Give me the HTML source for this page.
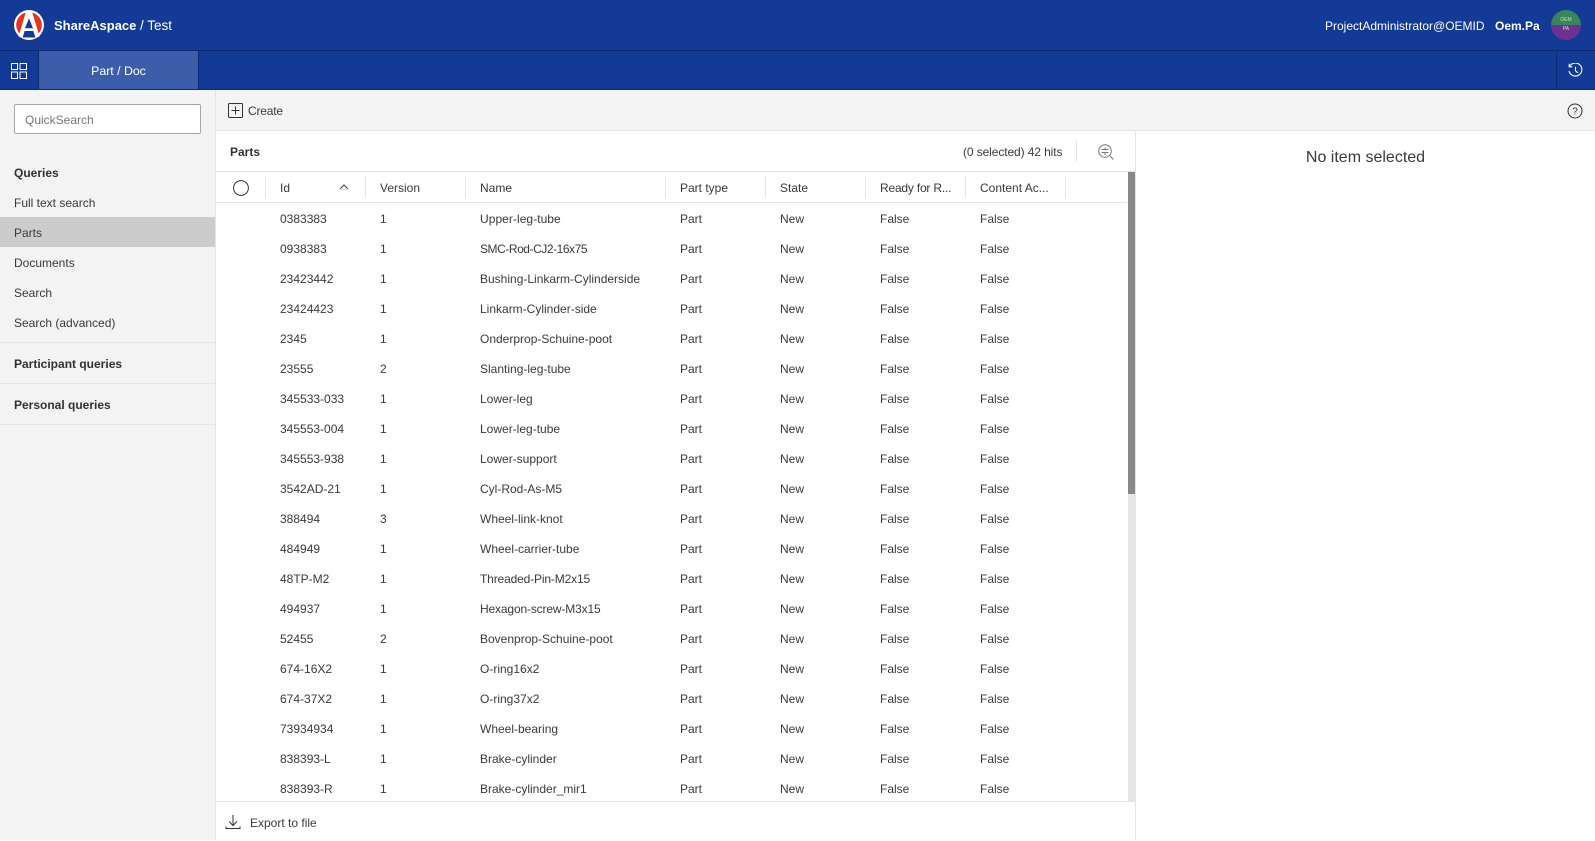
<!DOCTYPE html>
<html><head><meta charset="utf-8"><style>
html,body{margin:0;padding:0;width:1595px;height:840px;overflow:hidden;background:#fff;font-family:"Liberation Sans",sans-serif;font-size:12px;color:#3b3a39}
.a{position:absolute;white-space:nowrap}
.r{position:absolute;left:216px;width:911px;height:30px;line-height:30px;white-space:nowrap;overflow:hidden}
.r span{position:absolute;top:0}
.r span:nth-child(1),.h span:nth-child(1){left:64px}.r span:nth-child(2),.h span:nth-child(2){left:164px}.r span:nth-child(3),.h span:nth-child(3){left:264px}.r span:nth-child(4),.h span:nth-child(4){left:464px}.r span:nth-child(5),.h span:nth-child(5){left:564px}.r span:nth-child(6),.h span:nth-child(6){left:664px}.r span:nth-child(7),.h span:nth-child(7){left:764px}
.h{position:absolute;left:216px;top:173px;width:911px;height:30px;line-height:30px}
.h span{position:absolute;top:0}
.s{position:absolute;top:176px;width:1px;height:22px;background:#e6e6e6}
.n{position:absolute;left:14px;height:30px;line-height:30px}
.b{font-weight:bold;color:#323130}
</style></head><body>
<div class="a" style="left:0;top:0;width:1595px;height:50px;background:#133a96"></div>
<div class="a" style="left:0;top:50px;width:1595px;height:40px;background:#133a96;border-top:1px solid #0e2a6e;border-bottom:1px solid #0e2a6e;box-sizing:border-box"></div>
<svg class="a" style="left:14px;top:10px" width="30" height="30" viewBox="0 0 30 30"><circle cx="15" cy="15" r="15" fill="#fff"/><circle cx="15" cy="15" r="12.8" fill="#e8321e"/><path d="M12 1.500h6L25.500 26.500 21 28H9L4.500 26.500z" fill="#fff"/><path d="M15 8.300l4 10H11z" fill="#133a96"/><path d="M10.600 21h8.800l2 6.500H8.600z" fill="#133a96"/></svg>
<div class="a" style="left:54px;top:17px;font-size:13px;line-height:18px;color:#fff"><b>ShareAspace</b> <span style="font-size:13.500px">/ Test</span></div>
<div class="a" style="left:1325px;top:17px;font-size:12px;line-height:18px;color:#fff">ProjectAdministrator@OEMID</div>
<div class="a" style="left:1495px;top:17px;font-size:12px;font-weight:bold;line-height:18px;color:#fff">Oem.Pa</div>
<div class="a" style="left:1551px;top:10px;width:30px;height:15px;background:#36865a;border-radius:15px 15px 0 0;color:#d8d8d8;font-size:5px;line-height:21px;text-align:center">OEM</div>
<div class="a" style="left:1551px;top:25px;width:30px;height:15px;background:#6f3191;border-radius:0 0 15px 15px;color:#d8d8d8;font-size:5px;line-height:9px;text-align:center">PA</div>
<svg class="a" style="left:11px;top:63px" width="16" height="16" viewBox="0 0 16 16" fill="none" stroke="#fff" stroke-width="1"><rect x=".5" y=".5" width="6" height="6"/><rect x="9" y=".5" width="6.500" height="6"/><rect x=".5" y="9" width="6" height="6.500"/><rect x="9" y="9" width="6.500" height="6.500"/></svg>
<div class="a" style="left:38px;top:51px;width:159px;height:38px;background:#3b5daa;border-left:1px solid #0e2a6e;border-right:1px solid #0e2a6e;color:#fff;text-align:center;line-height:38px;font-size:12.300px"><span style="position:relative;top:1px">Part / Doc</span></div>
<div class="a" style="left:1556px;top:51px;width:1px;height:38px;background:#0e2a6e"></div>
<svg class="a" style="left:1568px;top:63px" width="15" height="15" viewBox="0 0 15 15" fill="none" stroke="#fff" stroke-width="1.100"><path d="M1.600 3.500A6.500 6.500 0 1 1 1 8"/><path d="M1.200 .8v3h3"/><path d="M7.500 3.800v4l2.500 2"/></svg>

<div class="a" style="left:0;top:90px;width:215px;height:750px;background:#f3f3f3;border-right:1px solid #e4e4e4"></div>
<div class="a" style="left:216px;top:90px;width:1379px;height:40px;background:#f3f3f3;border-bottom:1px solid #e4e4e4"></div>
<div class="a" style="left:14px;top:104px;width:185px;height:28px;background:#fff;border:1px solid #a6a6a6;border-radius:2px;line-height:30px;text-indent:10px;color:#777">QuickSearch</div>
<div class="n b" style="top:158px">Queries</div>
<div class="n" style="top:188px">Full text search</div>
<div class="a" style="left:0;top:217px;width:215px;height:30px;background:#ccc"></div>
<div class="n" style="top:218px">Parts</div>
<div class="n" style="top:248px">Documents</div>
<div class="n" style="top:278px">Search</div>
<div class="n" style="top:308px">Search (advanced)</div>
<div class="a" style="left:0;top:342px;width:215px;height:1px;background:#e4e4e4"></div>
<div class="n b" style="top:349px">Participant queries</div>
<div class="a" style="left:0;top:383px;width:215px;height:1px;background:#e4e4e4"></div>
<div class="n b" style="top:390px">Personal queries</div>
<div class="a" style="left:0;top:424px;width:215px;height:1px;background:#e4e4e4"></div>

<svg class="a" style="left:228px;top:103px" width="15" height="15" viewBox="0 0 15 15" fill="none" stroke="#333"><rect x=".5" y=".5" width="14" height="14" rx="1"/><path d="M7.500 3.500v8M3.500 7.500h8"/></svg>
<div class="a" style="left:248px;top:101px;line-height:20px;letter-spacing:-.2px">Create</div>
<svg class="a" style="left:1567px;top:103px" width="16" height="16" viewBox="0 0 16 16" fill="none" stroke="#333"><circle cx="8" cy="8" r="7"/><text x="8" y="11.500" font-size="10" text-anchor="middle" fill="#333" stroke="none" font-family="Liberation Sans">?</text></svg>

<div class="a b" style="left:230px;top:142px;line-height:20px">Parts</div>
<div class="a" style="left:963px;top:142px;line-height:20px;letter-spacing:-.1px">(0 selected) 42 hits</div>
<div class="a" style="left:1076px;top:140px;width:1px;height:22px;background:#e6e6e6"></div>
<svg class="a" style="left:1098px;top:144px" width="16" height="16" viewBox="0 0 16 16" fill="none" stroke="#777"><circle cx="7" cy="7" r="6.300"/><path d="M12 12l3.500 3.500M3.500 5.500h7M3.500 8.500h7M7 3.500v3M7 9v2"/></svg>
<div class="a" style="left:216px;top:171px;width:919px;height:1px;background:#e4e4e4"></div>
<div class="a" style="left:216px;top:202px;width:911px;height:1px;background:#e4e4e4"></div>
<div class="h"><span>Id</span><span>Version</span><span>Name</span><span>Part type</span><span>State</span><span style="letter-spacing:-.2px">Ready for R...</span><span>Content Ac...</span></div>
<svg class="a" style="left:233px;top:180px" width="16" height="16" viewBox="0 0 16 16" fill="none" stroke="#333"><circle cx="8" cy="8" r="7.400"/></svg>
<svg class="a" style="left:339px;top:184px" width="10" height="7" viewBox="0 0 10 7" fill="none" stroke="#444"><path d="M1 5l4-4 4 4"/></svg>
<div class="s" style="left:265px"></div><div class="s" style="left:365px"></div><div class="s" style="left:465px"></div><div class="s" style="left:665px"></div><div class="s" style="left:765px"></div><div class="s" style="left:865px"></div><div class="s" style="left:965px"></div><div class="s" style="left:1065px"></div>

<div class="r" style="top:204px"><span>0383383</span><span>1</span><span style="letter-spacing:.05px">Upper-leg-tube</span><span>Part</span><span>New</span><span>False</span><span>False</span></div>
<div class="r" style="top:234px"><span>0938383</span><span>1</span><span style="letter-spacing:-.45px">SMC-Rod-CJ2-16x75</span><span>Part</span><span>New</span><span>False</span><span>False</span></div>
<div class="r" style="top:264px"><span>23423442</span><span>1</span><span>Bushing-Linkarm-Cylinderside</span><span>Part</span><span>New</span><span>False</span><span>False</span></div>
<div class="r" style="top:294px"><span>23424423</span><span>1</span><span>Linkarm-Cylinder-side</span><span>Part</span><span>New</span><span>False</span><span>False</span></div>
<div class="r" style="top:324px"><span>2345</span><span>1</span><span>Onderprop-Schuine-poot</span><span>Part</span><span>New</span><span>False</span><span>False</span></div>
<div class="r" style="top:354px"><span>23555</span><span>2</span><span>Slanting-leg-tube</span><span>Part</span><span>New</span><span>False</span><span>False</span></div>
<div class="r" style="top:384px"><span>345533-033</span><span>1</span><span>Lower-leg</span><span>Part</span><span>New</span><span>False</span><span>False</span></div>
<div class="r" style="top:414px"><span>345553-004</span><span>1</span><span>Lower-leg-tube</span><span>Part</span><span>New</span><span>False</span><span>False</span></div>
<div class="r" style="top:444px"><span>345553-938</span><span>1</span><span>Lower-support</span><span>Part</span><span>New</span><span>False</span><span>False</span></div>
<div class="r" style="top:474px"><span>3542AD-21</span><span>1</span><span>Cyl-Rod-As-M5</span><span>Part</span><span>New</span><span>False</span><span>False</span></div>
<div class="r" style="top:504px"><span>388494</span><span>3</span><span>Wheel-link-knot</span><span>Part</span><span>New</span><span>False</span><span>False</span></div>
<div class="r" style="top:534px"><span>484949</span><span>1</span><span>Wheel-carrier-tube</span><span>Part</span><span>New</span><span>False</span><span>False</span></div>
<div class="r" style="top:564px"><span>48TP-M2</span><span>1</span><span style="letter-spacing:-.15px">Threaded-Pin-M2x15</span><span>Part</span><span>New</span><span>False</span><span>False</span></div>
<div class="r" style="top:594px"><span>494937</span><span>1</span><span style="letter-spacing:-.15px">Hexagon-screw-M3x15</span><span>Part</span><span>New</span><span>False</span><span>False</span></div>
<div class="r" style="top:624px"><span>52455</span><span>2</span><span>Bovenprop-Schuine-poot</span><span>Part</span><span>New</span><span>False</span><span>False</span></div>
<div class="r" style="top:654px"><span>674-16X2</span><span>1</span><span>O-ring16x2</span><span>Part</span><span>New</span><span>False</span><span>False</span></div>
<div class="r" style="top:684px"><span>674-37X2</span><span>1</span><span>O-ring37x2</span><span>Part</span><span>New</span><span>False</span><span>False</span></div>
<div class="r" style="top:714px"><span>73934934</span><span>1</span><span>Wheel-bearing</span><span>Part</span><span>New</span><span>False</span><span>False</span></div>
<div class="r" style="top:744px"><span>838393-L</span><span>1</span><span>Brake-cylinder</span><span>Part</span><span>New</span><span>False</span><span>False</span></div>
<div class="r" style="top:774px"><span>838393-R</span><span>1</span><span>Brake-cylinder_mir1</span><span>Part</span><span>New</span><span>False</span><span>False</span></div>

<div class="a" style="left:1128px;top:172px;width:8px;height:629px;background:#e6e6e6"></div>
<div class="a" style="left:1128px;top:172px;width:7px;height:322px;background:#888"></div>
<div class="a" style="left:1135px;top:131px;width:1px;height:709px;background:#e4e4e4"></div>
<div class="a" style="left:216px;top:801px;width:919px;height:39px;background:#fff;border-top:1px solid #e4e4e4"></div>
<svg class="a" style="left:225px;top:814px" width="16" height="16" viewBox="0 0 16 16" fill="none" stroke="#333"><path d="M8 1v10M4 7.500l4 4 4-4"/><path d="M1 12.500v2h14v-2" stroke-width="1"/></svg>
<div class="a" style="left:250px;top:813px;line-height:20px">Export to file</div>
<div class="a" style="left:1136px;width:459px;text-align:center;top:147px;font-size:16px;line-height:22px">No item selected</div>
</body></html>
